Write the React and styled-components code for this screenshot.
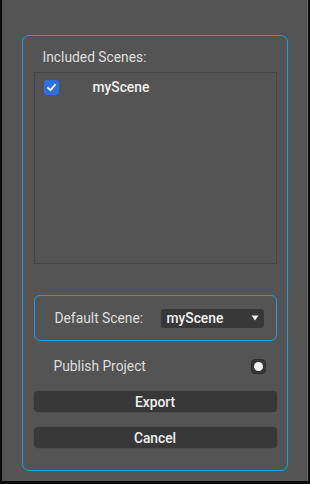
import React, { useState } from "react";
import styled, { createGlobalStyle } from "styled-components";

const GlobalStyle = createGlobalStyle`
  html, body {
    margin: 0;
    padding: 0;
    background: #141821;
  }
  body {
    font-family: Roboto, Inter, "Liberation Sans", Arial, sans-serif;
  }
`;

const Page = styled.div`
  width: 310px;
  height: 484px;
  background: #0c0c0c;
  overflow: hidden;
`;

const Window = styled.div`
  box-sizing: border-box;
  margin-left: 2px;
  width: 306px;
  height: 481px;
  background: #545454;
  border-right: 1px solid #6e6e6e;
  padding-top: 35px;
`;

const Frame = styled.div`
  box-sizing: border-box;
  margin-left: 20px;
  width: 266px;
  border: 1.5px solid #1d9fe2;
  border-radius: 7px;
  padding: 11px 10.5px 22px;
  display: flex;
  flex-direction: column;
`;

const Heading = styled.div`
  color: #dedede;
  font-size: 13.8px;
  line-height: 20px;
  padding-left: 9px;
`;

const SceneList = styled.div`
  box-sizing: border-box;
  margin-top: 5px;
  height: 192px;
  border: 1px solid #464646;
  background: #545454;
  padding: 6px 9px;
`;

const SceneRow = styled.label`
  display: flex;
  align-items: center;
  gap: 34px;
  color: #efefef;
  font-size: 13.8px;
  font-weight: 500;
  height: 16px;
`;

const CheckBox = styled.span`
  width: 15px;
  height: 15px;
  border-radius: 3px;
  background: ${(p) => (p.checked ? "#2f6fe4" : "#3a3a3a")};
  display: flex;
  align-items: center;
  justify-content: center;
  flex: none;
`;

const Group = styled.div`
  box-sizing: border-box;
  margin-top: 31px;
  height: 46px;
  border: 1.5px solid #1d9fe2;
  border-radius: 6px;
  display: flex;
  align-items: center;
  padding: 0 12px 0 20px;
  justify-content: space-between;
`;

const FieldLabel = styled.span`
  color: #dedede;
  font-size: 13.8px;
`;

const Select = styled.div`
  box-sizing: border-box;
  width: 103px;
  height: 19px;
  border-radius: 3px;
  background: #383838;
  display: flex;
  align-items: center;
  justify-content: space-between;
  padding: 0 5px 0 6px;
  color: #f2f2f2;
  font-size: 13.8px;
  font-weight: 500;
`;

const ToggleRow = styled.div`
  margin-top: 16px;
  height: 18px;
  display: flex;
  align-items: center;
  justify-content: space-between;
  padding: 0 11px 0 20px;
`;

const Radio = styled.span`
  box-sizing: border-box;
  width: 15px;
  height: 15px;
  border-radius: 4px;
  background: #363636;
  border: 1px solid #2c2c2c;
  display: flex;
  align-items: center;
  justify-content: center;
  &::after {
    content: "";
    width: 9px;
    height: 9px;
    border-radius: 50%;
    background: ${(p) => (p.on ? "#2f6fe4" : "#f4f4f4")};
  }
`;

const Button = styled.button`
  box-sizing: border-box;
  margin-top: ${(p) => p.gap}px;
  height: 21px;
  width: 100%;
  border: none;
  border-radius: 4px;
  background: #383838;
  box-shadow: 0 0 0 0.5px #4a4a4a;
  color: #efefef;
  font-family: inherit;
  font-size: 13.8px;
  font-weight: 500;
  padding: 0;
  cursor: pointer;
`;

const Check = () => (
  <svg width="11" height="11" viewBox="0 0 11 11">
    <path
      d="M2 5.8 L4.4 8.2 L9 2.8"
      fill="none"
      stroke="#fff"
      strokeWidth="1.8"
      strokeLinecap="round"
      strokeLinejoin="round"
    />
  </svg>
);

const Caret = () => (
  <svg width="8" height="6" viewBox="0 0 8 6">
    <path d="M0.5 0.5 H7.5 L4 5.5 Z" fill="#f2f2f2" />
  </svg>
);

export default function App() {
  const [checked, setChecked] = useState(true);
  const [publish, setPublish] = useState(false);
  return (
    <Page>
      <GlobalStyle />
      <Window>
        <Frame>
          <Heading>Included Scenes:</Heading>
          <SceneList>
            <SceneRow onClick={() => setChecked((c) => !c)}>
              <CheckBox checked={checked}>{checked && <Check />}</CheckBox>
              myScene
            </SceneRow>
          </SceneList>
          <Group>
            <FieldLabel>Default Scene:</FieldLabel>
            <Select>
              myScene
              <Caret />
            </Select>
          </Group>
          <ToggleRow>
            <FieldLabel>Publish Project</FieldLabel>
            <Radio on={publish} onClick={() => setPublish((p) => !p)} />
          </ToggleRow>
          <Button gap={16}>Export</Button>
          <Button gap={15}>Cancel</Button>
        </Frame>
      </Window>
    </Page>
  );
}
